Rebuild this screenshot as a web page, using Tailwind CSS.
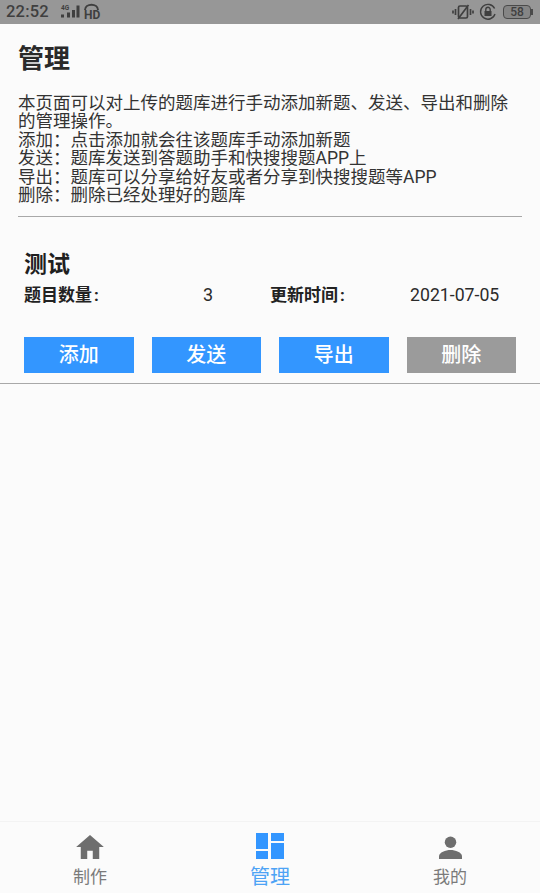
<!DOCTYPE html>
<html lang="zh-CN">
<head>
<meta charset="utf-8">
<script src="https://cdn.jsdelivr.net/npm/@tailwindcss/browser@4"></script>
</head>
<body class="m-0 w-[540px] h-[893px] overflow-hidden bg-[#fbfbfb] font-['Roboto','Noto_Sans_CJK_SC',sans-serif]">
<div class="flex flex-col h-[893px]">
  <div class="h-6 shrink-0 bg-[#979797] flex items-center justify-between pl-[6px] pr-[9px] text-[#3f3f3f]">
    <div class="flex items-center">
      <span class="text-[16.500px] leading-6 font-medium tracking-[0.2px] w-[50px]">22:52</span>
      <svg width="50" height="20" viewBox="0 0 50 20" fill="#3f3f3f" class="ml-[2px]">
        <text x="3" y="8" font-size="6.500" font-weight="700" font-family="Roboto">4G</text>
        <rect x="3" y="12.500" width="3" height="3"/><rect x="9" y="10.500" width="3" height="5"/><rect x="14" y="8" width="3" height="7.500"/><rect x="18.500" y="3.500" width="3" height="12"/>
        <text x="26" y="17" font-size="12" font-weight="700" font-family="Roboto">HD</text>
        <path d="M27 8c0-7 13-7 13 0" fill="none" stroke="#3f3f3f" stroke-width="2"/>
      </svg>
    </div>
    <div class="flex items-center">
      <svg width="22" height="18" viewBox="0 0 22 18" fill="none" stroke="#3f3f3f" stroke-width="1.700">
        <rect x="6.500" y="3" width="9" height="12" rx="1.500"/><path d="M6 16 16.500 2M3.500 6v6M1 7.500v3M18.500 6v6M21 7.500v3"/>
      </svg>
      <svg width="18" height="18" viewBox="0 0 18 18" fill="none" stroke="#3f3f3f" stroke-width="1.400" class="ml-[5px]">
        <path d="M16 11A7.400 7.400 0 1 1 15.600 5.500"/><rect x="5.500" y="8" width="7" height="5" fill="#3f3f3f" stroke="none"/><path d="M6.800 8V6.500a2.200 2.200 0 0 1 4.400 0V8"/>
      </svg>
      <div class="relative ml-[6px] w-[28px] h-[14px] rounded-[4px] border border-[#4a4a4a] bg-[#858585] flex items-center justify-center text-[12px] leading-none font-medium">58
        <span class="absolute -right-[3px] top-[3px] w-[2px] h-[6px] bg-[#4a4a4a]"></span>
      </div>
    </div>
  </div>

  <main class="flex-1 min-h-0">
    <div class="px-[18px]">
      <h1 class="text-[26px] leading-8 font-bold text-[#2a2a2a] pt-[19px]">管理</h1>
      <p class="mt-[19px] pb-[12px] border-b border-[#a8a8a8] text-[17.5px] leading-[18.4px] text-[#333]">本页面可以对上传的题库进行手动添加新题、发送、导出和删除的管理操作。<br>添加：点击添加就会往该题库手动添加新题<br>发送：题库发送到答题助手和快搜搜题APP上<br>导出：题库可以分享给好友或者分享到快搜搜题等APP<br>删除：删除已经处理好的题库</p>
    </div>
    <section class="border-b border-[#a8a8a8] pb-[10px] px-6">
      <h2 class="mt-[33px] text-[23px] leading-[30px] font-bold text-[#1f1f1f]">测试</h2>
      <div class="flex items-center h-[26px] mt-[2px] text-[17px] text-[#2b2b2b]">
        <span class="w-[179px] font-bold text-[#222]">题目数量<span class="ml-[2px]">:</span></span>
        <span class="w-[67px] text-[18px] leading-none">3</span>
        <span class="w-[140px] font-bold text-[#222]">更新时间<span class="ml-[2px]">:</span></span>
        <span class="text-[17.700px] leading-none">2021-07-05</span>
      </div>
      <div class="mt-[29px] flex gap-[18px]">
        <button class="w-[110px] h-9 bg-[#3396ff] text-white text-[20px] leading-none font-medium">添加</button>
        <button class="w-[110px] h-9 bg-[#3396ff] text-white text-[20px] leading-none font-medium">发送</button>
        <button class="w-[110px] h-9 bg-[#3396ff] text-white text-[20px] leading-none font-medium">导出</button>
        <button class="w-[110px] h-9 bg-[#9b9b9b] text-white text-[20px] leading-none font-medium">删除</button>
      </div>
    </section>
  </main>

  <nav class="h-[72px] shrink-0 border-t border-[#f3f3f3] bg-[#fbfbfb] grid grid-cols-3">
    <div class="flex flex-col items-center">
      <svg width="30" height="24" viewBox="0 0 32 26" fill="#6e6e6e" class="mt-[13px]"><path d="M16 0 1 13h5v13h7v-9h6v9h7V13h5z"/></svg>
      <span class="text-[17px] leading-5 text-[#7a7a7a] mt-[8px]">制作</span>
    </div>
    <div class="flex flex-col items-center">
      <svg width="28" height="26" viewBox="0 0 28 26" fill="#3396ff" class="mt-[11px]"><rect width="12" height="16"/><rect y="18" width="12" height="8"/><rect x="15" width="13" height="8"/><rect x="15" y="10" width="13" height="16"/></svg>
      <span class="text-[20px] leading-6 text-[#4da3f5] mt-[6px]">管理</span>
    </div>
    <div class="flex flex-col items-center">
      <svg width="25" height="23" viewBox="0 0 26 24" fill="#6e6e6e" class="mt-[14px]"><circle cx="13" cy="6.500" r="6"/><path d="M1 24v-3c0-4 7-6.500 12-6.500S25 17 25 21v3z"/></svg>
      <span class="text-[17px] leading-5 text-[#7a7a7a] mt-[8px]">我的</span>
    </div>
  </nav>
</div>
</body>
</html>
